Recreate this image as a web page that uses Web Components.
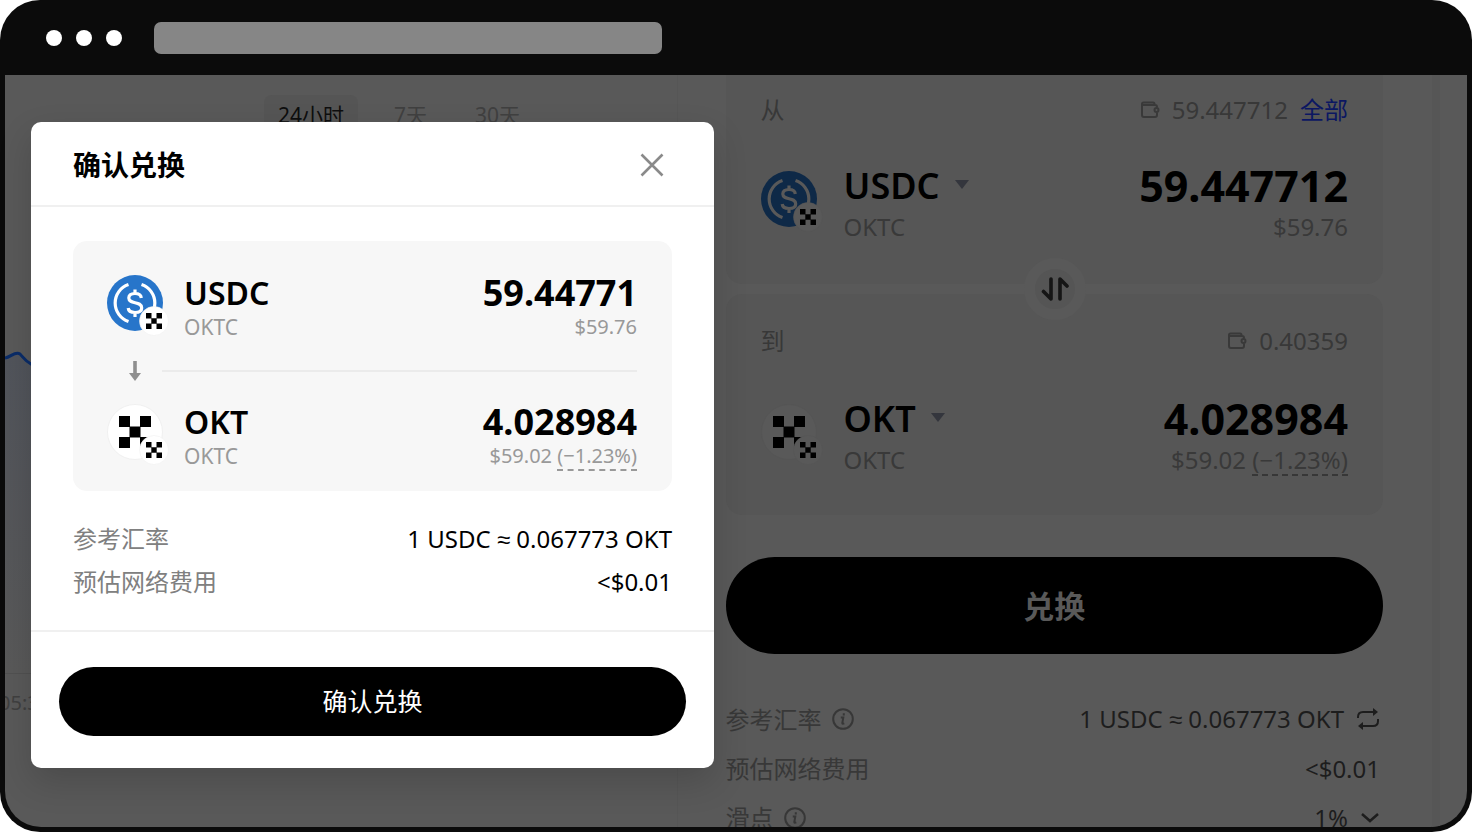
<!DOCTYPE html>
<html lang="zh-CN">
<head>
<meta charset="utf-8">
<title>确认兑换</title>
<style>
  body {
    margin: 0;
    background: #fff;
    font-family: "Noto Sans", "Noto Sans CJK SC", sans-serif;
  }
</style>
</head>
<body>
<browser-frame>
  <price-chart></price-chart>
  <swap-panel></swap-panel>
  <confirm-dialog slot="dialog"></confirm-dialog>
</browser-frame>

<script>
const base = `
  :host, *, ::before, ::after { box-sizing: border-box; }
  button { border: 0; padding: 0; background: none; color: inherit; font: inherit; cursor: pointer; }
  p, h2, dl, dd, dt { margin: 0; font: inherit; }
  svg { display: block; flex: none; }
  .approx { font-family: "Liberation Sans", sans-serif; }
`;

function define(name, html) {
  const template = document.createElement("template");
  template.innerHTML = html;
  window.customElements.define(name, class extends HTMLElement {
    constructor() {
      super();
      this.attachShadow({ mode: "open" });
      this.shadowRoot.appendChild(template.content.cloneNode(true));
    }
  });
}

define("browser-frame", `
  <style>
    ${base}
    :host {
      display: flex;
      flex-direction: column;
      position: relative;
      height: 100vh;
      padding: 0 5px 5px;
      border-radius: 40px;
      background: #0b0b0b;
      overflow: hidden;
    }
    .bar {
      flex: none;
      display: flex;
      align-items: center;
      gap: 14px;
      height: 75px;
      padding: 0 10px 0 41px;
    }
    .dot { width: 16px; height: 16px; border-radius: 50%; background: #fff; }
    .address { width: 36%; height: 32px; margin-left: 18px; border-radius: 7px; background: #868686; }
    .screen {
      flex: 1;
      min-height: 0;
      display: flex;
      background: #595959;
      border-radius: 0 0 36px 36px;
      overflow: hidden;
    }
    ::slotted(confirm-dialog) { position: absolute; left: 31px; top: 122px; }
  </style>
  <div class="bar">
    <span class="dot"></span><span class="dot"></span><span class="dot"></span>
    <span class="address"></span>
  </div>
  <main class="screen"><slot></slot></main>
  <slot name="dialog"></slot>
`);

define("price-chart", `
  <style>
    ${base}
    :host {
      flex: 0 0 46%;
      min-width: 0;
      display: flex;
      flex-direction: column;
      border-right: 1px solid #565656;
      font-size: 21px;
      line-height: 40px;
      color: #404040;
    }
    .tabs { display: flex; gap: 24px; padding: 20px 0 0 259px; }
    .tabs button { padding: 0 12px; border-radius: 8px; height: 40px; white-space: nowrap; }
    .tabs button.active { background: #555; color: #0e0e0e; padding: 0 14px; }
    .plot { margin-top: 214px; height: 325px; border-bottom: 1px solid #515151; }
    .axis { margin-left: -6px; font-size: 20px; padding-top: 9px; }
  </style>
  <div class="tabs">
    <button type="button" class="active">24小时</button>
    <button type="button">7天</button>
    <button type="button">30天</button>
  </div>
  <div class="plot">
    <svg width="80" height="324" viewBox="0 0 80 324">
      <defs><linearGradient id="fade" x1="0" y1="0" x2="0" y2="1">
        <stop offset="0" stop-color="#51545b"/><stop offset="1" stop-color="#595959"/>
      </linearGradient></defs>
      <path d="M0 9 C6 9 9 2 15 5 L24 14 L80 30 V324 H0Z" fill="url(#fade)"/>
      <path d="M0 9 C6 8 10 2 15 5 C18 8 20 12 26 15 L40 20" fill="none" stroke="#0a2c68" stroke-width="3"/>
    </svg>
  </div>
  <div class="axis">05:30</div>
`);

// Token logo with the chain badge in its corner; <token-icon token="usdc|okt" dim>
define("token-icon", `
  <style>
    ${base}
    :host { display: block; flex: none; width: 62px; height: 62px; --ring: #fff; --edge: #f0f0f0; --brand: #2775ca; }
    :host([dim]) { --ring: #595959; --edge: #555; --brand: #0e2947; }
    :host([token="usdc"]) .okt, :host([token="okt"]) .usdc { display: none; }
  </style>
  <svg width="62" height="62" viewBox="0 0 62 62" aria-hidden="true">
    <g class="usdc">
      <circle cx="28" cy="28" r="28" fill="var(--brand)"/>
      <g fill="none" stroke="var(--ring)" stroke-width="3.2">
        <path d="M21.500 9.500 A19.500 19.500 0 0 0 21.500 46.500"/>
        <path d="M34.500 9.500 A19.500 19.500 0 0 1 34.500 46.500"/>
        <path d="M34.300 23 C34 19.500 31.500 18.500 28 18.500 C24 18.500 21.800 20.300 21.800 23 C21.800 30 34.700 25.500 34.700 33 C34.700 36 32 37.500 28 37.500 C24 37.500 21.500 36.500 21.200 33 M28 14.500 V18.500 M28 37.500 V42"/>
      </g>
    </g>
    <g class="okt">
      <circle cx="28" cy="28" r="27.500" fill="var(--ring)" stroke="var(--edge)"/>
      <path d="M12 12h11v11H12zM33 12h11v11H33zM22.500 22.500h11v11h-11zM12 33h11v11H12zM33 33h11v11H33z"/>
    </g>
    <circle cx="47" cy="46" r="14.500" fill="var(--ring)" stroke="var(--edge)" stroke-width=".6"/>
    <path d="M39 38h5.500v5.500H39zM49.500 38h5.500v5.500h-5.500zM44.300 43.300h5.400v5.400h-5.400zM39 48.500h5.500v5.500H39zM49.500 48.500h5.500v5.500h-5.500z"/>
  </svg>
`);

// One token with its network on the left and its amount on the right
define("token-row", `
  <style>
    ${base}
    :host {
      display: flex;
      align-items: center;
      justify-content: space-between;
      --name: 32px; --amount: 36px; --network: 21px; --value: 20px; --line: 38px; --sub: 30px; --gap: 15px;
      color: #000;
    }
    :host([large]) {
      --name: 36px; --amount: 43px; --network: 24px; --value: 24px; --line: 46px; --sub: 36px; --gap: 21px;
    }
    .token { display: flex; align-items: center; gap: var(--gap); }
    .text { padding-top: 4px; }
    .name { font-size: var(--name); line-height: var(--line); font-weight: 600; }
    .network { font-size: var(--network); line-height: var(--sub); color: var(--muted, #999); }
    .money { text-align: right; }
    .amount { font-size: var(--amount); line-height: var(--line); font-weight: 700; }
    .value { font-size: var(--value); line-height: var(--sub); color: var(--muted, #999); }
  </style>
  <div class="token">
    <slot name="icon"></slot>
    <div class="text">
      <div class="name"><slot name="name"></slot></div>
      <div class="network"><slot name="network"></slot></div>
    </div>
  </div>
  <div class="text money">
    <div class="amount"><slot name="amount"></slot></div>
    <div class="value"><slot name="value"></slot></div>
  </div>
`);

const wallet = `<svg width="20" height="18" viewBox="0 0 20 18" fill="none" stroke="#393939" stroke-width="2" stroke-linejoin="round" aria-hidden="true">
  <path d="M17 6.500V6a2 2 0 0 0-2-2H2V14a2 2 0 0 0 2 2H15a2 2 0 0 0 2-2V11.500M2 4.500V3a1.500 1.500 0 0 1 1.500-1.500H13a1.500 1.500 0 0 1 1.500 1.500V4"/><circle cx="16.500" cy="9" r="2"/></svg>`;
const info = `<svg width="22" height="22" viewBox="0 0 22 22" fill="none" stroke="#373737" stroke-width="2" aria-hidden="true">
  <circle cx="11" cy="11" r="9.800"/><path d="M8.800 9.500h2.500L10.300 15q0 1.200 2 .3M11.800 5.300v2.200"/></svg>`;
const caret = `<svg width="14" height="9" viewBox="0 0 14 9" aria-hidden="true"><path d="M0 0h14L7 9z" fill="#34363d"/></svg>`;

define("swap-panel", `
  <style>
    ${base}
    :host {
      flex: 1;
      min-width: 0;
      padding: 0 84px 0 48px;
      color: #383838;
      --muted: #393939;
      font-size: 24px;
      line-height: 36px;
      background: linear-gradient(#565656, #565656) right 27px top / 8px 100% no-repeat;
    }
    .card { padding: 0 35px; background: #565656; }
    .from { height: 209px; padding-top: 17px; border-radius: 0 0 16px 16px; }
    .to { height: 221px; margin-top: 10px; padding-top: 29px; border-radius: 16px; }
    .head { display: flex; justify-content: space-between; }
    .balance { display: flex; align-items: center; gap: 12px; }
    .balance button { color: #0b1762; }
    token-row { margin-top: 31px; }
    .to token-row { margin-top: 33px; }
    .pick { display: flex; align-items: center; gap: 15px; font-weight: 600; }
    .pick svg { margin-bottom: 4px; }
    .impact { border-bottom: 2px dashed #373737; display: inline-block; line-height: 28px; }
    .swap {
      position: absolute;
      display: flex;
      align-items: center;
      justify-content: center;
      width: 62px;
      height: 62px;
      margin: -26px 0 0 298px;
      border-radius: 50%;
      background: #555;
      border: 11px solid #595959;
    }
    .submit {
      display: block;
      width: 100%;
      height: 97px;
      margin-top: 42px;
      border-radius: 49px;
      background: #000;
      color: #595959;
      font-size: 31px;
      font-weight: 700;
    }
    .details { margin-top: 40px; }
    .details div { display: flex; justify-content: space-between; line-height: 49px; padding-right: 3px; }
    .details dt, .details dd { display: flex; align-items: center; gap: 10px; }
    .details dd { color: #1d1d1d; gap: 12px; }
  </style>
  <section class="card from">
    <div class="head">
      <span>从</span>
      <span class="balance">${wallet}<span>59.447712</span><button type="button">全部</button></span>
    </div>
    <token-row large>
      <token-icon slot="icon" token="usdc" dim></token-icon>
      <button slot="name" type="button" class="pick">USDC ${caret}</button>
      <span slot="network">OKTC</span>
      <span slot="amount">59.447712</span>
      <span slot="value">$59.76</span>
    </token-row>
  </section>
  <button type="button" class="swap" aria-label="切换">
    <svg width="28" height="26" viewBox="0 0 28 26" fill="none" stroke="#151515" stroke-width="3.600" stroke-linecap="round" stroke-linejoin="round" aria-hidden="true">
      <path d="M10 3V23L2.500 15.500M19 23V3L26 10"/>
    </svg>
  </button>
  <section class="card to">
    <div class="head">
      <span>到</span>
      <span class="balance">${wallet}<span>0.40359</span></span>
    </div>
    <token-row large>
      <token-icon slot="icon" token="okt" dim></token-icon>
      <button slot="name" type="button" class="pick">OKT ${caret}</button>
      <span slot="network">OKTC</span>
      <span slot="amount">4.028984</span>
      <span slot="value">$59.02 <span class="impact">(−1.23%)</span></span>
    </token-row>
  </section>
  <button type="button" class="submit">兑换</button>
  <dl class="details">
    <div>
      <dt>参考汇率 ${info}</dt>
      <dd><span>1 USDC <span class="approx">≈</span> 0.067773 OKT</span>
        <svg width="24" height="22" viewBox="0 0 24 22" fill="none" stroke="#1d1d1d" stroke-width="2" aria-hidden="true">
          <path d="M2 10V9q0-5 5-5H19M22 11v2q0 5-5 5H5"/><path d="M17 0l5 4-5 4zM7 14l-5 4 5 4z" fill="#1d1d1d" stroke="none"/>
        </svg>
      </dd>
    </div>
    <div><dt>预估网络费用</dt><dd>&lt;$0.01</dd></div>
    <div>
      <dt>滑点 ${info}</dt>
      <dd>1%
        <svg width="20" height="10" viewBox="0 0 20 10" fill="none" stroke="#1d1d1d" stroke-width="2.500" aria-hidden="true"><path d="M2 1l8 7 8-7"/></svg>
      </dd>
    </div>
  </dl>
`);

define("confirm-dialog", `
  <style>
    ${base}
    :host {
      display: block;
      width: 683px;
      border-radius: 10px;
      background: #fff;
      color: #000;
      box-shadow: 0 14px 34px rgba(0, 0, 0, .16);
    }
    header {
      display: flex;
      align-items: center;
      justify-content: space-between;
      height: 85px;
      padding: 3px 50px 0 42px;
      border-bottom: 2px solid #f0f0f0;
    }
    h2 { font-size: 28px; line-height: 40px; font-weight: 700; }
    .body { padding: 34px 42px 27px; }
    .card { padding: 29px 35px 0 34px; border-radius: 14px; background: #f7f7f7; height: 250px; }
    .divider { display: flex; align-items: center; gap: 20px; height: 57px; padding-left: 21px; }
    .divider hr { flex: 1; margin: 0; border: 0; height: 2px; background: #ebebeb; }
    .impact { border-bottom: 2px dashed #999; display: inline-block; line-height: 26px; }
    dl { padding-top: 27px; font-size: 24px; line-height: 42px; }
    dl div { display: flex; justify-content: space-between; }
    dt { color: #808080; }
    footer { padding: 35px 28px 32px; border-top: 2px solid #f0f0f0; }
    footer button {
      display: block;
      width: 100%;
      height: 69px;
      padding-bottom: 3px;
      border-radius: 35px;
      background: #000;
      color: #fff;
      font-size: 25px;
    }
  </style>
  <div role="dialog" aria-labelledby="title">
    <header>
      <h2 id="title">确认兑换</h2>
      <button type="button" aria-label="关闭">
        <svg width="24" height="24" viewBox="0 0 24 24" fill="none" stroke="#8a8a8a" stroke-width="2.600" aria-hidden="true"><path d="M1.500 1.500l21 21M22.500 1.500l-21 21"/></svg>
      </button>
    </header>
    <div class="body">
      <div class="card">
        <token-row>
          <token-icon slot="icon" token="usdc"></token-icon>
          <span slot="name">USDC</span>
          <span slot="network">OKTC</span>
          <span slot="amount">59.44771</span>
          <span slot="value">$59.76</span>
        </token-row>
        <div class="divider">
          <svg width="14" height="22" viewBox="0 0 14 22" aria-hidden="true"><path d="M5.200 1h3.600v12H13L7 21 1 13h4.200z" fill="#8f8f8f"/></svg>
          <hr>
        </div>
        <token-row>
          <token-icon slot="icon" token="okt"></token-icon>
          <span slot="name">OKT</span>
          <span slot="network">OKTC</span>
          <span slot="amount">4.028984</span>
          <span slot="value">$59.02 <span class="impact">(−1.23%)</span></span>
        </token-row>
      </div>
      <dl>
        <div><dt>参考汇率</dt><dd>1 USDC <span class="approx">≈</span> 0.067773 OKT</dd></div>
        <div><dt>预估网络费用</dt><dd>&lt;$0.01</dd></div>
      </dl>
    </div>
    <footer><button type="button">确认兑换</button></footer>
  </div>
`);
</script>
</body>
</html>
